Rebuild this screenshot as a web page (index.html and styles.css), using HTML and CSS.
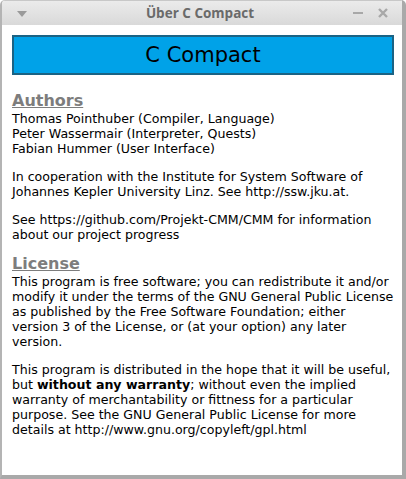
FILE: index.html
```html
<!DOCTYPE html>
<html>
<head>
<meta charset="utf-8">
<link rel="stylesheet" href="styles.css">
</head>
<body>
<div class="window">
  <div class="titlebar">
    <svg class="menu-arrow" width="10" height="6" viewBox="0 0 10 6"><polygon points="0,0 10,0 5,6" fill="#9a9a9a"/></svg>
    <span class="title">Über C Compact</span>
    <div class="controls">
      <svg width="10" height="10" viewBox="0 0 10 10"><rect x="0" y="4" width="10" height="2" fill="#a8a8a8"/></svg>
      <svg width="10" height="10" viewBox="0 0 10 10"><path d="M1 1 L9 9 M9 1 L1 9" stroke="#a8a8a8" stroke-width="2.4"/></svg>
    </div>
  </div>
  <div class="content">
    <div class="banner">C Compact</div>
    <h2 class="heading">Authors</h2>
    <p class="text">Thomas Pointhuber (Compiler, Language)<br>Peter Wassermair (Interpreter, Quests)<br>Fabian Hummer (User Interface)</p>
    <p class="text gap">In cooperation with the Institute for System Software of Johannes Kepler University Linz. See http://ssw.jku.at.</p>
    <p class="text gap">See https://github.com/Projekt-CMM/CMM for information about our project progress</p>
    <h2 class="heading lic">License</h2>
    <p class="text">This program is free software; you can redistribute it and/or modify it under the terms of the GNU General Public License as published by the Free Software Foundation; either version 3 of the License, or (at your option) any later version.</p>
    <p class="text gap">This program is distributed in the hope that it will be useful, but <b>without any warranty</b>; without even the implied warranty of merchantability or fittness for a particular purpose. See the GNU General Public License for more details at http://www.gnu.org/copyleft/gpl.html</p>
  </div>
</div>
</body>
</html>
```
FILE: styles.css
```css
html, body {
  margin: 0;
  padding: 0;
  background: #ffffff;
}
.window {
  width: 406px;
  height: 479px;
  box-sizing: border-box;
  display: flex;
  flex-direction: column;
  background: #ffffff;
  border-left: 2px solid #b4b4b4;
  border-right: 4px solid #a9a9a9;
  border-bottom: 4px solid #a9a9a9;
  border-radius: 5px 5px 0 0;
  overflow: hidden;
}
.titlebar {
  height: 25px;
  flex: none;
  display: flex;
  align-items: center;
  justify-content: space-between;
  padding: 0 14px 0 15px;
  background: linear-gradient(#ebebeb, #d9d9d9);
  border-top: 1px solid #c8c8c8;
  box-sizing: border-box;
}
.menu-arrow {
  margin-top: 1px;
}
.title {
  font-family: "Open Sans", "DejaVu Sans", sans-serif;
  font-weight: bold;
  font-size: 13.5px;
  color: #6a6a6a;
  margin-left: 20px;
}
.controls {
  display: flex;
  gap: 15px;
  align-items: center;
}
.content {
  padding: 10px 8px 0 10px;
  font-family: "DejaVu Sans", sans-serif;
  font-size: 12.6px;
  line-height: 15px;
  color: #000;
}
.banner {
  height: 40px;
  box-sizing: border-box;
  border: 2px solid #1b6384;
  background: #00a2e8;
  color: #000;
  font-size: 21px;
  display: flex;
  align-items: center;
  justify-content: center;
}
.heading {
  margin: 15px 0 0 0;
  font-size: 16px;
  line-height: 21px;
  font-weight: bold;
  color: #7d7d7d;
  text-decoration: underline;
}
.heading.lic {
  margin-top: 11px;
}
.text {
  margin: 0;
}
.text.gap {
  margin-top: 13px;
}
```
